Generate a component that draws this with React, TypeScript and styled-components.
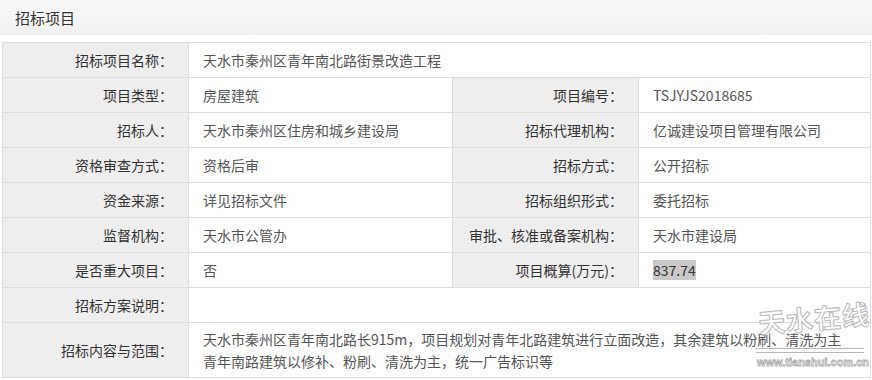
import styled, { createGlobalStyle } from "styled-components";

interface Field {
    label: string;
    value: string;
}

interface InfoRow {
    left: Field;
    right?: Field;
    tall?: boolean;
    multiline?: string[];
}

const GlobalStyle = createGlobalStyle`
    html, body {
        margin: 0;
        padding: 0;
        background: #ffffff;
    }
    body {
        font-family: "Microsoft YaHei", "Noto Sans CJK SC", "Noto Sans", sans-serif;
    }
`;

const Page = styled.div`
    width: 872px;
    height: 380px;
    position: relative;
    overflow: hidden;
    background: #ffffff;
`;

const Header = styled.div`
    height: 35px;
    display: flex;
    align-items: center;
    padding-left: 15px;
    background: linear-gradient(to bottom, #f9f9f9 0%, #f0f0f0 100%);
    color: #333333;
    font-size: 15px;
`;

const TableWrap = styled.div`
    padding: 7px 2px 0 2px;
`;

const Table = styled.table`
    width: 868px;
    border-collapse: collapse;
    table-layout: fixed;
    font-size: 14px;
`;

const Row = styled.tr<{ $tall?: boolean }>`
    height: ${(props) => (props.$tall ? "55px" : "35px")};
`;

const Label = styled.td`
    background: #eeeeee;
    border: 1px solid #dddddd;
    color: #333333;
    text-align: right;
    padding: 0 15px 0 0;
    white-space: nowrap;
`;

const Value = styled.td`
    background: #ffffff;
    border: 1px solid #dddddd;
    color: #555555;
    padding: 0 0 0 14px;
    line-height: 22px;
`;

const Selected = styled.span`
    background: #c9c9c9;
    color: #333333;
`;

const Watermark = styled.div`
    position: absolute;
    left: 756px;
    top: 296px;
    width: 114px;
    pointer-events: none;
    display: flex;
    flex-direction: column;
    align-items: flex-start;
`;

const MarkTitle = styled.div`
    font-family: "Noto Sans CJK SC", sans-serif;
    font-weight: 700;
    font-size: 27px;
    letter-spacing: 1px;
    line-height: 44px;
    color: rgba(255, 255, 255, 0.55);
    -webkit-text-stroke: 1px #bbbbbb;
    transform: rotate(-5deg);
    white-space: nowrap;
    margin-left: 2px;
`;

const MarkRule = styled.div`
    width: 108px;
    height: 3px;
    margin-top: 8px;
    border-top: 1px solid #b8b8b8;
    border-bottom: 1px solid #b8b8b8;
`;

const MarkUrl = styled.div`
    font-family: "Liberation Sans", sans-serif;
    font-weight: 700;
    font-size: 11px;
    line-height: 14px;
    margin-top: 2px;
    margin-left: 1px;
    color: #ffffff;
    -webkit-text-stroke: 0.8px #aaaaaa;
    white-space: nowrap;
`;

const rows: InfoRow[] = [
    { left: { label: "招标项目名称：", value: "天水市秦州区青年南北路街景改造工程" } },
    { left: { label: "项目类型：", value: "房屋建筑" }, right: { label: "项目编号：", value: "TSJYJS2018685" } },
    { left: { label: "招标人：", value: "天水市秦州区住房和城乡建设局" }, right: { label: "招标代理机构：", value: "亿诚建设项目管理有限公司" } },
    { left: { label: "资格审查方式：", value: "资格后审" }, right: { label: "招标方式：", value: "公开招标" } },
    { left: { label: "资金来源：", value: "详见招标文件" }, right: { label: "招标组织形式：", value: "委托招标" } },
    { left: { label: "监督机构：", value: "天水市公管办" }, right: { label: "审批、核准或备案机构：", value: "天水市建设局" } },
    { left: { label: "是否重大项目：", value: "否" }, right: { label: "项目概算(万元)：", value: "837.74" } },
    { left: { label: "招标方案说明：", value: "" } },
    {
        left: { label: "招标内容与范围：", value: "" },
        tall: true,
        multiline: [
            "天水市秦州区青年南北路长915m，项目规划对青年北路建筑进行立面改造，其余建筑以粉刷、清洗为主",
            "青年南路建筑以修补、粉刷、清洗为主，统一广告标识等",
        ],
    },
];

const App = (): JSX.Element => {
    return (
        <Page>
            <GlobalStyle />
            <Header>招标项目</Header>
            <TableWrap>
                <Table>
                    <colgroup>
                        <col style={{ width: 186 }} />
                        <col style={{ width: 264 }} />
                        <col style={{ width: 186 }} />
                        <col style={{ width: 232 }} />
                    </colgroup>
                    <tbody>
                        {rows.map((row, i) => (
                            <Row key={i} $tall={row.tall}>
                                <Label>{row.left.label}</Label>
                                {row.right ? (
                                    <>
                                        <Value>{row.left.value}</Value>
                                        <Label>{row.right.label}</Label>
                                        <Value>
                                            {row.right.value === "837.74" ? <Selected>{row.right.value}</Selected> : row.right.value}
                                        </Value>
                                    </>
                                ) : (
                                    <Value colSpan={3}>
                                        {row.multiline
                                            ? row.multiline.map((line, j) => <div key={j}>{line}</div>)
                                            : row.left.value}
                                    </Value>
                                )}
                            </Row>
                        ))}
                    </tbody>
                </Table>
            </TableWrap>
            <Watermark>
                <MarkTitle>天水在线</MarkTitle>
                <MarkRule />
                <MarkUrl>www.tianshui.com.cn</MarkUrl>
            </Watermark>
        </Page>
    );
};

export default App;
